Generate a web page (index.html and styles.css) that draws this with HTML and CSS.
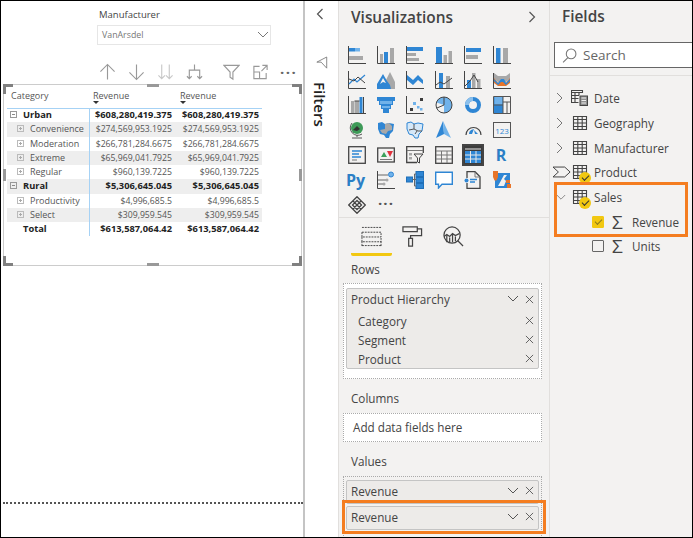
FILE: index.html
```html
<!DOCTYPE html>
<html lang="en">
<head>
    <meta charset="UTF-8">
    <meta name="viewport" content="width=device-width, initial-scale=1.0">
    <title>Power BI report</title>
    <link rel="stylesheet" href="styles.css">
</head>
<body>
<div class="screen">

    <div class="canvas">
        <div class="slicer">
            <div class="slicer-label">Manufacturer</div>
            <div class="slicer-box">
                <span>VanArsdel</span>
                <svg class="ico-10" viewBox="0 0 12 8"><path class="thin" d="M1 1l5 5 5-5"/></svg>
            </div>
        </div>
        <div class="toolbar">
            <svg class="tool t1" viewBox="0 0 18 18"><path class="tl" d="M9 17V1M1.500 8.500L9 1l7.500 7.500"/></svg>
            <svg class="tool t2" viewBox="0 0 18 18"><path class="tl" d="M9 1v16M1.500 9.500L9 17l7.500-7.500"/></svg>
            <svg class="tool t3" viewBox="0 0 18 18"><path class="tl faint" d="M5 1v15M1.500 12.500L5 16l3.500-3.500M13 1v15M9.500 12.500L13 16l3.500-3.500"/></svg>
            <svg class="tool t4" viewBox="0 0 18 18"><path class="tl" d="M9 1v6M3.500 16V7h11v9M1 13.500L3.500 16 6 13.500M12 13.500l2.500 2.500 2.500-2.500"/></svg>
            <svg class="tool t5" viewBox="0 0 18 18"><path class="tl" d="M1 2h16l-6.500 7v7.500l-3-2V9z"/></svg>
            <svg class="tool t6" viewBox="0 0 18 18"><path class="tl" d="M8 3H2v13h13v-6M2 9h6v7M10 8l6-6M11 2h5v5"/></svg>
            <div class="tool-more">&middot;&middot;&middot;</div>
        </div>
        <div class="visual">
            <i class="handle h-tl"></i><i class="handle h-tr"></i><i class="handle h-bl"></i><i class="handle h-br"></i>
            <i class="grip g-top"></i><i class="grip g-bottom"></i><i class="grip g-left"></i><i class="grip g-right"></i>
            <table class="matrix">
                <thead>
                    <tr><th class="c1">Category</th><th class="c2">Revenue<b class="sort"></b></th><th class="c3">Revenue<b class="sort"></b></th></tr>
                </thead>
                <tbody>
                    <tr class="cat"><td class="c1"><i class="box"></i>Urban</td><td class="c2">$608,280,419.375</td><td>$608,280,419.375</td></tr>
                    <tr class="shade"><td class="c1 sub"><i class="box small"></i>Convenience</td><td class="c2">$274,569,953.1925</td><td>$274,569,953.1925</td></tr>
                    <tr><td class="c1 sub"><i class="box small"></i>Moderation</td><td class="c2">$266,781,284.6675</td><td>$266,781,284.6675</td></tr>
                    <tr class="shade"><td class="c1 sub"><i class="box small"></i>Extreme</td><td class="c2">$65,969,041.7925</td><td>$65,969,041.7925</td></tr>
                    <tr><td class="c1 sub"><i class="box small"></i>Regular</td><td class="c2">$960,139.7225</td><td>$960,139.7225</td></tr>
                    <tr class="cat shade"><td class="c1"><i class="box"></i>Rural</td><td class="c2">$5,306,645.045</td><td>$5,306,645.045</td></tr>
                    <tr><td class="c1 sub"><i class="box small"></i>Productivity</td><td class="c2">$4,996,685.5</td><td>$4,996,685.5</td></tr>
                    <tr class="shade"><td class="c1 sub"><i class="box small"></i>Select</td><td class="c2">$309,959.545</td><td>$309,959.545</td></tr>
                    <tr class="cat"><td class="c1 total">Total</td><td class="c2">$613,587,064.42</td><td>$613,587,064.42</td></tr>
                </tbody>
            </table>
        </div>
        <div class="page-end"></div>
    </div>

    <div class="filters">
        <svg class="chev" viewBox="0 0 8 12"><path class="dk" d="M6.500 1l-5 5 5 5"/></svg>
        <svg class="filter-ico" viewBox="0 0 14 16"><path class="thin" d="M12.500 1L1 7h5l6.500 7z"/></svg>
        <div class="filters-label">Filters</div>
    </div>

    <div class="viz">
        <div class="viz-head">
            <h2>Visualizations</h2>
            <svg class="chev" viewBox="0 0 8 12"><path class="dk" d="M1.500 1l5 5-5 5"/></svg>
        </div>
        <div class="gallery">
            <!-- row 1 -->
            <svg viewBox="0 0 18 18"><path class="ax" d="M.5 0v17.500H18"/><rect class="blu" x="1" y="2" width="6" height="3.500"/><rect class="lt" x="7" y="2" width="5" height="3.500"/><rect class="gry" x="1" y="10" width="14" height="4"/></svg>
            <svg viewBox="0 0 18 18"><path class="ax" d="M.5 0v17.500H18"/><rect class="gry" x="3" y="8" width="3" height="9"/><rect class="blu" x="7" y="6" width="4" height="11"/><rect class="gry" x="13" y="2" width="4" height="15"/></svg>
            <svg viewBox="0 0 18 18"><path class="ax" d="M.5 0v17.500H18"/><rect class="blu" x="1" y="1" width="16" height="4"/><rect class="gry" x="1" y="7" width="9" height="3"/><rect class="gry" x="1" y="12" width="12" height="3"/></svg>
            <svg viewBox="0 0 18 18"><path class="ax" d="M0 17.500h18"/><rect class="blu" x="1" y="1" width="6" height="16"/><rect class="gry" x="8.500" y="9" width="3.500" height="8"/><rect class="gry" x="13.500" y="5" width="3.500" height="12"/></svg>
            <svg viewBox="0 0 18 18"><path class="ax" d="M.5 0v17.500H18"/><rect class="blu" x="2" y="2" width="15" height="4"/><rect class="gry" x="2" y="9" width="12" height="4"/></svg>
            <svg viewBox="0 0 18 18"><path class="ax" d="M.5 0v17.500H18"/><rect class="blu" x="3" y="2" width="4.500" height="15"/><rect class="gry" x="10" y="2" width="5" height="15"/></svg>
            <!-- row 2 -->
            <svg viewBox="0 0 18 18"><path class="ax" d="M.5 0v17.500H18"/><path class="ln-b" d="M1 13l5-5 3 3 8-7"/><path class="ln-d" d="M1 8l5 2 4-4 7 6"/></svg>
            <svg viewBox="0 0 18 18"><path class="gry" d="M9 9l4-8 5 10v7H11z"/><path class="blu" d="M0 18V13L6 3l4 7 3 4 1 4z"/><path class="wht" d="M3 13l3-6 3 5-3-1z"/></svg>
            <svg viewBox="0 0 18 18"><path class="ax" d="M.5 0v17.500H18"/><path class="blu" d="M1 4l6 5 5-5 5 5v4l-5-4-5 5-6-5z"/></svg>
            <svg viewBox="0 0 18 18"><path class="ax" d="M.5 0v17.500H18"/><rect class="blu" x="4" y="2" width="4" height="15"/><rect class="gry" x="11" y="5" width="4" height="12"/><path class="ln-d" d="M1 14l4-3 4 2 8-6"/></svg>
            <svg viewBox="0 0 18 18"><path class="ax" d="M.5 0v17.500H18"/><rect class="blu" x="3" y="9" width="4" height="8"/><rect class="gry" x="8" y="2" width="3.500" height="15"/><rect class="gry" x="13" y="8" width="3.500" height="9"/><path class="ln-d" d="M1 15l5-5 4-6 4 7"/></svg>
            <svg viewBox="0 0 18 18"><path class="ax" d="M.5 2v15.500H18"/><path class="gry" d="M1 2l4 3h8l4-3v6l-4 3H5L1 8z"/><path class="org" d="M1 7l4 5 3-2 3 0 2 2 4-5v5l-4 3H5l-4-3z"/><path class="blu" d="M1 8l4 4 3-4 3 0 2 4 4-4v2l-4 4-3-3-2 0-3 3-4-4z"/></svg>
            <!-- row 3 -->
            <svg viewBox="0 0 18 18"><path class="ax" d="M.5 0v17.500H18"/><rect class="gry" x="3" y="5" width="3.500" height="12"/><rect class="gry" x="7" y="5" width="4" height="12"/><rect class="blu" x="11.500" y="1" width="3" height="16"/><path class="ax" d="M6.500 5h5M15.500 1v16"/></svg>
            <svg viewBox="0 0 18 18"><path class="blu" d="M0 1h18v4h-2v4h-2v4h-2v4H6v-4H4V9H2V5H0z"/><path class="lt" d="M3 5h12v3H3zM5 10h8v2H5z"/></svg>
            <svg viewBox="0 0 18 18"><path class="ax" d="M.5 0v17.500H18"/><rect class="drk" x="4" y="12" width="3" height="3"/><rect class="lt" x="7" y="6" width="3" height="3"/><rect class="lt" x="11" y="10" width="2.500" height="2.500"/><rect class="drk" x="14" y="2" width="3" height="3"/><rect class="lt" x="14" y="12" width="2.500" height="2.500"/></svg>
            <svg viewBox="0 0 18 18"><circle class="lt" cx="9" cy="9" r="8"/><path class="wht-f" d="M9 9V17A8 8 0 0 1 1.500 6.500z"/><circle class="rng" cx="9" cy="9" r="8"/><path class="ax" d="M9 1v8l-7 3"/></svg>
            <svg viewBox="0 0 18 18"><circle class="dn" cx="9" cy="9" r="6"/><path class="dn-g" d="M3 9a6 6 0 0 1 6-6"/></svg>
            <svg viewBox="0 0 18 18"><rect class="blu" x="1" y="1" width="9" height="16"/><path class="lt" d="M1.500 1h8v7.500h-8z"/><path class="box-o" d="M.5.500h17v17H.5zM10 .5v17M10 6h7M14 6v11M.5 9H10"/></svg>
            <!-- row 4 -->
            <svg viewBox="0 0 18 18"><circle class="grn" cx="9" cy="7" r="6"/><path class="ink" d="M5 9l4-4 3 3-3 2z"/><path class="box-o" d="M4 2a7.500 7.500 0 0 0 10 11M9 14v2M4 17h10"/></svg>
            <svg viewBox="0 0 18 18"><path class="blu" d="M1 2l4-1 3 2 4-1 5 1-1 7-3 3-1 4-3 0-2-3-4-1-2-5z"/><path class="gry" d="M8 3l4-1 3 3 0 4-4 1-3-2zM3 9l5-1 3 2-2 3-4-1z"/></svg>
            <svg viewBox="0 0 18 18"><path class="lt-o" d="M1 2l4-1 3 2 4-1 5 1-1 7-3 3-1 4-3 0-2-3-4-1-2-5z"/><path class="box-o" d="M8 3l0 5-5 1M8 8l4 2 4 0M11 10l-2 3"/></svg>
            <svg viewBox="0 0 18 18"><path class="blu" d="M8 0L1 17l8-4z"/><path class="lt" d="M8 0l8 17-7-4z"/></svg>
            <svg viewBox="0 0 18 18"><path class="dk2" d="M2 14a7.500 7.500 0 0 1 15 0"/><path class="blu" d="M5 13a4.500 4.500 0 0 1 2-4l3-1-2 5zM10 9l4 4h-3z"/></svg>
            <svg viewBox="0 0 18 18"><rect class="box-o" x=".5" y="1.500" width="17" height="15"/><text class="num" x="9" y="12.500">123</text></svg>
            <!-- row 5 -->
            <svg viewBox="0 0 18 18"><rect class="box-o2" x=".7" y=".7" width="16.600" height="16.600"/><path class="ln-b2" d="M4 5h10M4 8h7M4 11h9"/><path class="thin" d="M4 14h5"/></svg>
            <svg viewBox="0 0 18 18"><rect class="box-o2" x=".7" y="2" width="16.600" height="14"/><path class="tri-g" d="M4 11l3-5 3 5z"/><path class="tri-r" d="M10 5h6l-3 6z"/><path class="thin" d="M3 13.500h12"/></svg>
            <svg viewBox="0 0 18 18"><path class="box-o2" d="M11 16.500H.7V.7h16.600V7"/><path class="thin" d="M1 4.500h16"/><rect class="gry" x="3" y="7" width="3" height="2.500"/><rect class="gry" x="3" y="11" width="3" height="2.500"/><path class="wht-k" d="M8 8h9l-3.500 4v5l-2-1v-4z"/></svg>
            <svg viewBox="0 0 18 18"><rect class="box-o2" x=".7" y=".7" width="16.600" height="16.600"/><path class="thin" d="M1 5h16M1 9h16M1 13h16M6.500 5v12M12 5v12"/></svg>
            <div class="active-cell"><svg viewBox="0 0 18 18"><rect class="drk" x="0" y="0" width="18" height="18"/><rect class="blu" x="1" y="5" width="16" height="12"/><path class="wht-ln" d="M1 9h16M1 13h16M6.500 5v12M12 5v12"/><path class="wht-ln" d="M1 3h16"/></svg></div>
            <div class="glyph glyph-r">R</div>
            <!-- row 6 -->
            <div class="glyph glyph-py">Py</div>
            <svg viewBox="0 0 18 18"><path class="ax" d="M.5 0v17.500H18"/><path class="ink-ln" d="M1 4h10M1 9h8M1 13h5"/><circle class="lt-c" cx="14" cy="3.500" r="2.500"/><circle class="gry" cx="10" cy="9" r="1.500"/><circle class="gry" cx="7" cy="13" r="1.500"/></svg>
            <svg viewBox="0 0 18 18"><rect class="blu-k" x=".5" y="6" width="6" height="5"/><rect class="blu-k" x="10" y=".5" width="7.500" height="5"/><rect class="blu-k" x="10" y="6.500" width="7.500" height="5"/><rect class="blu-k" x="10" y="12.500" width="7.500" height="5"/><path class="ink-ln" d="M6.500 8.500H10M8.500 3v12M8.500 3H10M8.500 15H10"/></svg>
            <svg viewBox="0 0 18 18"><path class="bub" d="M.7 1.200h16.600v12H7L3.500 17v-3.800H.7z"/></svg>
            <svg viewBox="0 0 18 18"><path class="box-o2" d="M3 7V.7h8l5 5v11.600H3V12"/><path class="thin" d="M11 1v5h5"/><circle class="blu" cx="2.500" cy="9.500" r="2"/><path class="ln-b2" d="M6 8.500h7M6 11h5"/></svg>
            <svg viewBox="0 0 18 18"><path class="blu" d="M2 2h15v15H2z"/><path class="wht" d="M5 15l6-11h3l-3 4 2 2-2 5z"/><path class="org" d="M0 0h5v6L3.500 9.500h-2L0 6zM13 9h4v3h-4zM14 13h4v4h-4z"/></svg>
            <!-- row 7 -->
            <svg viewBox="0 0 18 18"><path class="box-o2" d="M9 .7L17.300 9 9 17.300.7 9zM5 5l8 8M13 5l-8 8M9 4.500L4.500 9 9 13.500 13.500 9z"/></svg>
            <div class="glyph glyph-more">&middot;&middot;&middot;</div>
        </div>
        <div class="tabs">
            <div class="tab tab-on"><svg viewBox="0 0 22 22"><path class="dash" d="M1 1.500h20M1 6.500h20v5H1zM1 11.500v5h20v-5M1 20.500h20M1 16v5M21 16v5"/></svg></div>
            <div class="tab"><svg viewBox="0 0 22 22"><path class="box-o2" d="M1 1h15v5H1zM16 3h4.500v7H9v3M7 13h4v8H7z"/></svg></div>
            <div class="tab"><svg viewBox="0 0 22 22"><circle class="box-o2" cx="9.500" cy="9.500" r="8.500"/><path class="box-o2" d="M15.500 15.500L21 21M1 11l3-2 3 2 3-3 3 2 4-2M4 10v7M7 12v5M10 9v8M13 11v5"/></svg></div>
        </div>
        <div class="well-label">Rows</div>
        <div class="well">
            <div class="pill">
                <div class="pill-row head"><span>Product Hierarchy</span><svg class="mini" viewBox="0 0 12 8"><path class="thin2" d="M1 1l5 5 5-5"/></svg><svg class="x" viewBox="0 0 10 10"><path class="thin2" d="M1 1l8 8M9 1l-8 8"/></svg></div>
                <div class="pill-row child"><span>Category</span><svg class="x" viewBox="0 0 10 10"><path class="thin2" d="M1 1l8 8M9 1l-8 8"/></svg></div>
                <div class="pill-row child"><span>Segment</span><svg class="x" viewBox="0 0 10 10"><path class="thin2" d="M1 1l8 8M9 1l-8 8"/></svg></div>
                <div class="pill-row child"><span>Product</span><svg class="x" viewBox="0 0 10 10"><path class="thin2" d="M1 1l8 8M9 1l-8 8"/></svg></div>
            </div>
        </div>
        <div class="well-label cols">Columns</div>
        <div class="well empty">Add data fields here</div>
        <div class="well-label vals">Values</div>
        <div class="well values">
            <div class="pill single">
                <div class="pill-row"><span>Revenue</span><svg class="mini" viewBox="0 0 12 8"><path class="thin2" d="M1 1l5 5 5-5"/></svg><svg class="x" viewBox="0 0 10 10"><path class="thin2" d="M1 1l8 8M9 1l-8 8"/></svg></div>
            </div>
            <div class="pill single">
                <div class="pill-row"><span>Revenue</span><svg class="mini" viewBox="0 0 12 8"><path class="thin2" d="M1 1l5 5 5-5"/></svg><svg class="x" viewBox="0 0 10 10"><path class="thin2" d="M1 1l8 8M9 1l-8 8"/></svg></div>
            </div>
        </div>
        <div class="mark mark-value"></div>
    </div>

    <div class="fields">
        <h2>Fields</h2>
        <div class="search">
            <svg viewBox="0 0 14 14"><circle class="thin" cx="8.500" cy="5.500" r="4.500"/><path class="thin" d="M5.500 9L1 13.500"/></svg>
            <span>Search</span>
        </div>
        <div class="tree">
            <div class="node"><svg class="arrow" viewBox="0 0 8 12"><path class="thin" d="M1 1l5 5-5 5"/></svg>
                <svg class="tbl" viewBox="0 0 18 16"><path class="tb" d="M.5.500h11v2h-11zM.5 2.500v10h7M4 2.500v10M8 2.500v3M.5 5.500H8M.5 8.500h7"/><rect class="calc" x="9" y="6" width="7.500" height="9.500"/><path class="calc-k" d="M10.500 8h4.500M10.500 10.500h4.500M10.500 13h4.500"/></svg>
                <span>Date</span></div>
            <div class="node"><svg class="arrow" viewBox="0 0 8 12"><path class="thin" d="M1 1l5 5-5 5"/></svg>
                <svg class="tbl" viewBox="0 0 18 16"><path class="tb" d="M2.500 1.500h13v13h-13zM2.500 4.500h13M2.500 8h13M2.500 11.500h13M6.800 1.500v13M11.200 1.500v13"/></svg>
                <span>Geography</span></div>
            <div class="node"><svg class="arrow" viewBox="0 0 8 12"><path class="thin" d="M1 1l5 5-5 5"/></svg>
                <svg class="tbl" viewBox="0 0 18 16"><path class="tb" d="M2.500 1.500h13v13h-13zM2.500 4.500h13M2.500 8h13M2.500 11.500h13M6.800 1.500v13M11.200 1.500v13"/></svg>
                <span>Manufacturer</span></div>
            <div class="node"><svg class="hier" viewBox="0 0 20 12"><path class="tb" d="M0 .5h13l6 5.500-6 5.500H0l6-5.500z"/></svg>
                <svg class="tbl" viewBox="0 0 18 16"><path class="tb" d="M2.500 1.500h13v13h-13zM2.500 4.500h13M2.500 8h13M2.500 11.500h13M6.800 1.500v13M11.200 1.500v13"/></svg>
                <i class="tick"></i>
                <span>Product</span></div>
            <div class="node"><svg class="arrow down" viewBox="0 0 12 8"><path class="thin" d="M1 1l5 5 5-5"/></svg>
                <svg class="tbl" viewBox="0 0 18 16"><path class="tb" d="M2.500 1.500h13v13h-13zM2.500 4.500h13M2.500 8h13M2.500 11.500h13M6.800 1.500v13M11.200 1.500v13"/></svg>
                <i class="tick"></i>
                <span>Sales</span></div>
            <div class="node leaf"><i class="check on"></i><b class="sigma">&Sigma;</b><span>Revenue</span></div>
            <div class="node leaf"><i class="check"></i><b class="sigma">&Sigma;</b><span>Units</span></div>
        </div>
        <div class="mark mark-field"></div>
    </div>

</div>
</body>
</html>
```

FILE: styles.css
```css
* {
    box-sizing: border-box;
}
html, body {
    margin: 0;
    padding: 0;
}
body {
    font-family: "Open Sans", "Noto Sans", sans-serif;
    color: #333;
    background: #fff;
}
.screen {
    width: 693px;
    height: 538px;
    border: 1px solid #000;
    display: flex;
    overflow: hidden;
}
svg {
    display: block;
}

/* svg paint classes */
.thin { fill: none; stroke: #777; stroke-width: 1; }
.thin2 { fill: none; stroke: #555; stroke-width: 1; }
.dk { fill: none; stroke: #555; stroke-width: 1.2; }
.tl { fill: none; stroke: #999; stroke-width: 1.2; }
.tl.faint { stroke: #c8c8c8; }
.ax { fill: none; stroke: #444; stroke-width: 1; }
.blu { fill: #2f86d4; }
.lt { fill: #70b2ea; }
.gry { fill: #a8a8a8; }
.drk { fill: #3c3c3c; }
.org { fill: #e8752a; }
.wht { fill: #f3f2f1; }
.wht-f { fill: #f3f2f1; }
.wht-k { fill: #f3f2f1; stroke: #444; stroke-width: 1; }
.wht-ln { fill: none; stroke: #e8e8e8; stroke-width: 1; }
.rng { fill: none; stroke: #444; stroke-width: 1; }
.dn { fill: none; stroke: #2f86d4; stroke-width: 4; }
.dn-g { fill: none; stroke: #8cc0ec; stroke-width: 4; }
.dk2 { fill: none; stroke: #444; stroke-width: 1.2; }
.grn { fill: #3e9a58; }
.ink { fill: #333; }
.ink-ln { fill: none; stroke: #666; stroke-width: 1; }
.lt-o { fill: #d5e8f8; stroke: #2f86d4; stroke-width: 1; }
.lt-c { fill: #70b2ea; stroke: #2f86d4; stroke-width: 1; }
.blu-k { fill: #2f86d4; stroke: #1f6fb8; stroke-width: 1; }
.box-o { fill: none; stroke: #555; stroke-width: 1; }
.box-o2 { fill: none; stroke: #444; stroke-width: 1.3; }
.ln-b { fill: none; stroke: #2f86d4; stroke-width: 1.2; }
.ln-b2 { fill: none; stroke: #2f86d4; stroke-width: 1.3; }
.ln-d { fill: none; stroke: #444; stroke-width: 1; }
.tri-g { fill: #3aa05a; }
.tri-r { fill: #e0323c; }
.bub { fill: #fff; stroke: #2f86d4; stroke-width: 1.4; }
.num { font-size: 8px; fill: #2f86d4; text-anchor: middle; }
.dash { fill: none; stroke: #444; stroke-width: 1; stroke-dasharray: 2 1; }

/* report canvas */
.canvas {
    width: 304px;
    height: 100%;
    flex: none;
    border-right: 2px solid #c4c4c4;
}
.slicer {
    margin: 8px 0 0 96px;
    width: 174px;
}
.slicer-label {
    font-size: 9.500px;
    line-height: 12px;
    color: #444;
    padding-left: 2px;
}
.slicer-box {
    height: 20px;
    margin-top: 4px;
    border: 1px solid #e6e6e6;
    display: flex;
    align-items: center;
    justify-content: space-between;
    padding: 0 1px 0 4px;
    font-size: 8.800px;
    color: #777;
}
.ico-10 {
    width: 12px;
    height: 8px;
}
.toolbar {
    display: flex;
    align-items: center;
    height: 20px;
    margin: 17px 0 0 98px;
}
.tool {
    width: 17px;
    height: 18px;
    flex: none;
}
.t2, .t3, .t4 {
    margin-left: 12px;
}
.t5 {
    margin-left: 20px;
}
.t6 {
    margin-left: 12px;
}
.tool-more {
    margin-left: 11px;
    font-size: 15px;
    letter-spacing: 1.500px;
    font-weight: 700;
    color: #666;
    line-height: 14px;
}
.visual {
    position: relative;
    width: 299px;
    height: 182px;
    margin: 2px 0 0 2px;
    border: 1px solid #ccc;
    padding: 3px 0 0 3px;
}
.handle {
    position: absolute;
    width: 10px;
    height: 10px;
    border: 0 solid #808080;
}
.h-tl { left: -1px; top: -1px; border-width: 3px 0 0 3px; }
.h-tr { right: -1px; top: -1px; border-width: 3px 3px 0 0; }
.h-bl { left: -1px; bottom: -1px; border-width: 0 0 3px 3px; }
.h-br { right: -1px; bottom: -1px; border-width: 0 3px 3px 0; }
.grip {
    position: absolute;
    background: #999;
}
.g-top, .g-bottom {
    width: 12px;
    height: 3px;
    left: 143px;
}
.g-top { top: -1px; }
.g-bottom { bottom: -1px; }
.g-left, .g-right {
    width: 3px;
    height: 12px;
    top: 84px;
}
.g-left { left: -1px; }
.g-right { right: -1px; }
.matrix {
    border-collapse: collapse;
    table-layout: fixed;
    width: 255px;
    font-size: 8.700px;
    color: #333;
}
.matrix th {
    height: 20px;
    padding: 2px 0 0 4px;
    font-weight: 400;
    font-size: 9px;
    color: #555;
    text-align: left;
    vertical-align: top;
    position: relative;
    line-height: 12px;
    border-bottom: 1px solid #a6d2f5;
}
.matrix td {
    height: 14.250px;
    padding: 0 3px 0 0;
    text-align: right;
    line-height: 12px;
    white-space: nowrap;
    color: #555;
}
.matrix th.c1, .matrix td.c1 {
    width: 82px;
    font-size: 9px;
}
.matrix th.c2 {
    width: 86px;
}
.matrix th.c3 {
    width: 87px;
    padding-left: 5px;
}
.matrix td.c1 {
    text-align: left;
    padding-left: 3px;
}
.matrix td.c2 {
    border-left: 1px solid #a6d2f5;
}
.matrix .shade td {
    background: #eee;
}
.matrix .cat td {
    font-weight: 700;
    color: #222;
    font-size: 9.300px;
}
.matrix td.sub {
    padding-left: 10px;
}
.matrix td.total {
    padding-left: 16px;
}
.box {
    display: inline-block;
    width: 7px;
    height: 7px;
    border: 1px solid #999;
    margin-right: 6px;
    position: relative;
}
.box::before {
    content: "";
    position: absolute;
    left: 1px;
    top: 2px;
    width: 3px;
    height: 1px;
    background: #888;
}
.box.small {
    border-color: #bbb;
    margin-right: 6px;
}
.box.small::after {
    content: "";
    position: absolute;
    left: 2px;
    top: 1px;
    width: 1px;
    height: 3px;
    background: #aaa;
}
.box.small::before {
    background: #aaa;
}
.sort {
    position: absolute;
    left: 4px;
    top: 13px;
    border-style: solid;
    border-width: 3px 3px 0;
    border-color: #333 transparent transparent;
}
.c3 .sort {
    left: 5px;
}
.page-end {
    margin: 236px 0 0 2px;
    border-top: 2px dotted #555;
}

/* filters strip */
.filters {
    width: 33px;
    flex: none;
    padding: 7px 0 0 11px;
}
.chev {
    width: 8px;
    height: 12px;
}
.filter-ico {
    width: 12px;
    height: 14px;
    margin: 36px 0 0 0;
}
.filters-label {
    writing-mode: vertical-rl;
    font-size: 15px;
    font-weight: 600;
    color: #222;
    margin: 12px 0 0 -6px;
}

/* visualizations pane */
.viz {
    position: relative;
    width: 212px;
    flex: none;
    background: #f3f2f1;
    border-left: 1px solid #e1dfdd;
    border-right: 1px solid #e1dfdd;
    padding-top: 4px;
}
.viz-head {
    display: flex;
    align-items: center;
    justify-content: space-between;
    padding: 0 13px 0 12px;
    height: 24px;
}
h2 {
    margin: 0;
    font-size: 15.400px;
    font-weight: 600;
    color: #444;
}
.gallery {
    display: grid;
    grid-template-columns: repeat(6, 29px);
    grid-auto-rows: 25px;
    padding: 17px 0 0 9px;
    height: 188px;
    align-items: start;
}
.gallery > svg {
    width: 18px;
    height: 18px;
}
.active-cell {
    width: 22px;
    height: 22px;
    margin: -2px 0 0 -2px;
    background: #444;
    padding: 2px;
}
.active-cell svg {
    width: 18px;
    height: 18px;
}
.glyph {
    color: #2b7fc6;
    font-weight: 700;
    line-height: 18px;
    width: 18px;
    text-align: center;
    white-space: nowrap;
}
.glyph-r {
    font-size: 16px;
    margin-left: -1px;
}
.glyph-py {
    font-size: 16px;
    text-align: left;
    margin-left: -2px;
}
.glyph-more {
    color: #555;
    font-size: 15px;
    letter-spacing: 1px;
    line-height: 14px;
}
.tabs {
    display: flex;
    border-top: 1px solid #e1dfdd;
    padding: 7px 0 0 12px;
    height: 39px;
}
.tab {
    width: 41px;
    height: 31px;
    padding: 1px 0 0 10px;
}
.tab svg {
    width: 21px;
    height: 21px;
}
.tab-on {
    border-bottom: 3px solid #f2c811;
    border-radius: 2px;
}
.well-label {
    font-size: 11.700px;
    line-height: 17px;
    color: #444;
    padding: 0 0 0 12px;
    margin-top: 5px;
}
.well {
    margin: 5px 7px 0 4px;
    border: 1px dotted #aaa;
    background: #fff;
    padding: 4px 2px 9px;
    font-size: 11.700px;
}
.pill {
    background: #edebe9;
    border: 1px solid #c4c4c4;
    border-radius: 2px;
}
.pill-row {
    display: flex;
    align-items: center;
    height: 19px;
    padding: 0 4px;
    color: #444;
}
.pill-row.head {
    height: 20px;
    margin-bottom: 2px;
}
.pill-row span {
    flex: 1;
}
.child {
    padding-left: 11px;
}
.mini {
    width: 12px;
    height: 8px;
    margin-right: 6px;
}
.x {
    width: 9px;
    height: 9px;
}
.cols {
    margin-top: 11px;
}
.empty {
    height: 29px;
    margin-top: 6px;
    padding: 4px 0 0 9px;
    color: #444;
    line-height: 18px;
}
.vals {
    margin-top: 11px;
}
.values {
    margin-top: 6px;
    height: 70px;
    background: transparent;
    padding: 3px 2px 0;
}
.single {
    height: 24px;
    margin-bottom: 2px;
}
.mark {
    position: absolute;
    border: 3px solid #f47d20;
}
.mark-value {
    left: 3px;
    top: 499px;
    width: 204px;
    height: 34px;
}

/* fields pane */
.fields {
    position: relative;
    flex: 1;
    background: #f3f2f1;
    padding-top: 4px;
}
.fields h2 {
    padding-left: 12px;
    line-height: 24px;
}
.search {
    display: flex;
    align-items: center;
    height: 26px;
    margin: 13px -2px 0 4px;
    border: 1px solid #666;
    background: #fff;
    padding-left: 7px;
    font-size: 13.500px;
    color: #666;
}
.search svg {
    width: 15px;
    height: 15px;
    margin-right: 6px;
}
.tree {
    margin-top: 7px;
    border-top: 1px solid #e1dfdd;
    padding-top: 10px;
}
.node {
    display: flex;
    align-items: center;
    position: relative;
    height: 24.700px;
    padding-left: 6px;
    font-size: 11.700px;
    color: #444;
}
.arrow {
    width: 8px;
    height: 12px;
    margin-right: 7px;
    flex: none;
}
.arrow.down {
    width: 10px;
    height: 7px;
    margin-right: 5px;
}
.tbl {
    width: 18px;
    height: 16px;
    margin-right: 5px;
    flex: none;
}
.tb {
    fill: none;
    stroke: #444;
    stroke-width: 1.100;
}
.calc {
    fill: #8f8f8f;
    stroke: #444;
    stroke-width: 1;
}
.calc-k {
    stroke: #eee;
    fill: none;
    stroke-width: 1;
}
.hier {
    width: 18px;
    height: 12px;
    margin: 0 0 0 -3px;
    flex: none;
}
.tick {
    position: absolute;
    left: 29px;
    top: 12px;
    width: 12px;
    height: 12px;
    border-radius: 50%;
    background: #f2c811;
}
.tick::after {
    content: "";
    position: absolute;
    left: 3px;
    top: 3px;
    width: 6px;
    height: 3px;
    border: solid #333;
    border-width: 0 0 1.500px 1.500px;
    transform: rotate(-45deg);
}
.leaf {
    padding-left: 42px;
}
.check {
    width: 12px;
    height: 12px;
    border: 1px solid #666;
    border-radius: 1px;
    margin-right: 8px;
    flex: none;
    position: relative;
}
.check.on {
    background: #f2c811;
    border-color: #f2c811;
}
.check.on::after {
    content: "";
    position: absolute;
    left: 2px;
    top: 2px;
    width: 6px;
    height: 3px;
    border: solid #8a7a20;
    border-width: 0 0 1px 1px;
    transform: rotate(-45deg);
}
.sigma {
    font-weight: 400;
    font-size: 19px;
    line-height: 20px;
    width: 20px;
    color: #444;
    flex: none;
}
.mark-field {
    left: 4px;
    top: 181px;
    width: 134px;
    height: 55px;
}
```
